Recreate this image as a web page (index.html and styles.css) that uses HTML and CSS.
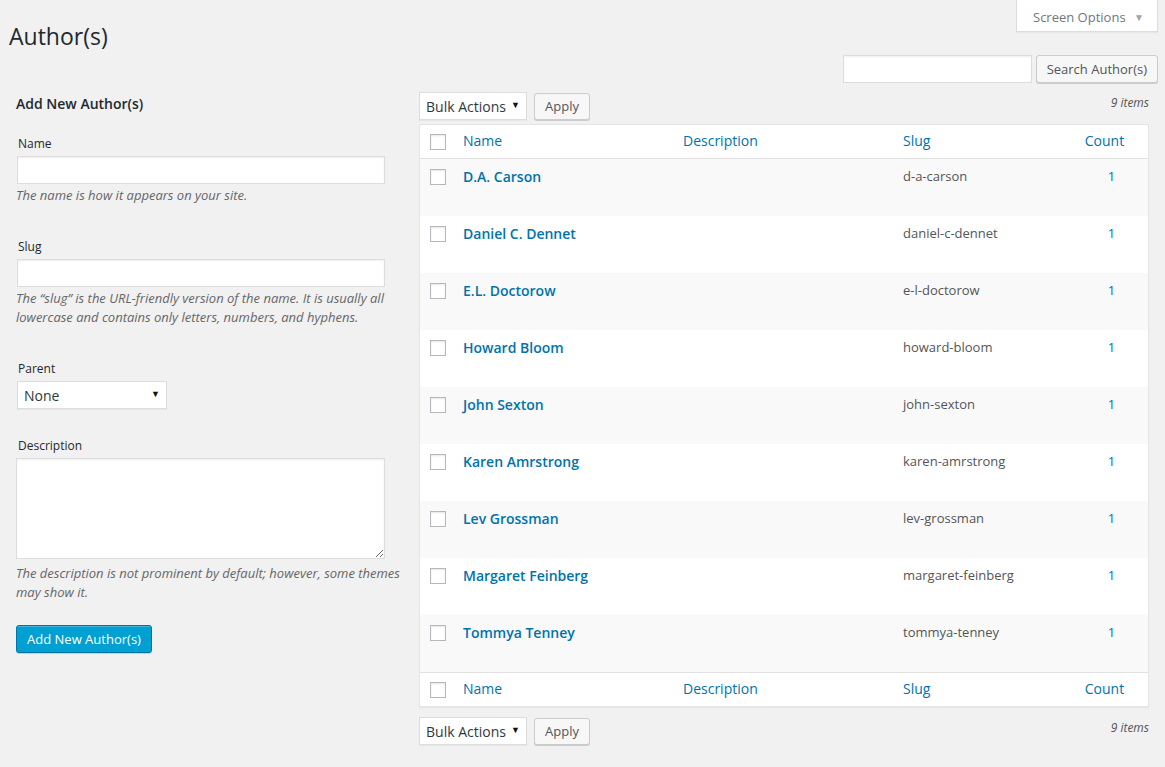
FILE: index.html
```html
<!DOCTYPE html>
<html lang="en">
<head>
<meta charset="utf-8">
<title>Author(s)</title>
<link rel="stylesheet" href="styles.css">
</head>
<body>
<div class="page">
  <div class="topbar">
    <h1 class="title">Author(s)</h1>
    <div class="screen-tab">Screen Options <span class="tab-caret">▼</span></div>
  </div>
  <div class="search-row">
    <input class="text-input search-input" type="text">
    <button class="btn">Search Author(s)</button>
  </div>
  <div class="cols">
    <div class="col-left">
      <h2 class="form-title">Add New Author(s)</h2>
      <div class="field">
        <label class="label">Name</label>
        <input class="text-input wide" type="text">
        <p class="help">The name is how it appears on your site.</p>
      </div>
      <div class="field">
        <label class="label">Slug</label>
        <input class="text-input wide" type="text">
        <p class="help">The “slug” is the URL-friendly version of the name. It is usually all lowercase and contains only letters, numbers, and hyphens.</p>
      </div>
      <div class="field">
        <label class="label">Parent</label>
        <div class="select parent-select"><span>None</span><span class="caret">▼</span></div>
      </div>
      <div class="field last">
        <label class="label">Description</label>
        <textarea class="textarea"></textarea>
        <p class="help">The description is not prominent by default; however, some themes may show it.</p>
      </div>
      <button class="btn btn-primary">Add New Author(s)</button>
    </div>
    <div class="col-right">
      <div class="tablenav">
        <div class="select bulk-select"><span>Bulk Actions</span><span class="caret">▼</span></div>
        <button class="btn apply">Apply</button>
        <span class="num">9 items</span>
      </div>
      <table class="list">
        <colgroup>
          <col class="c-check"><col class="c-name"><col class="c-desc"><col class="c-slug"><col class="c-count">
        </colgroup>
        <thead>
          <tr>
            <th class="check"><span class="cb"></span></th>
            <th><a>Name</a></th>
            <th><a>Description</a></th>
            <th><a>Slug</a></th>
            <th class="count"><a>Count</a></th>
          </tr>
        </thead>
        <tbody>
          <tr class="alt"><td class="check"><span class="cb"></span></td><td class="name"><a>D.A. Carson</a></td><td></td><td class="slug">d-a-carson</td><td class="count"><a>1</a></td></tr>
          <tr><td class="check"><span class="cb"></span></td><td class="name"><a>Daniel C. Dennet</a></td><td></td><td class="slug">daniel-c-dennet</td><td class="count"><a>1</a></td></tr>
          <tr class="alt"><td class="check"><span class="cb"></span></td><td class="name"><a>E.L. Doctorow</a></td><td></td><td class="slug">e-l-doctorow</td><td class="count"><a>1</a></td></tr>
          <tr><td class="check"><span class="cb"></span></td><td class="name"><a>Howard Bloom</a></td><td></td><td class="slug">howard-bloom</td><td class="count"><a>1</a></td></tr>
          <tr class="alt"><td class="check"><span class="cb"></span></td><td class="name"><a>John Sexton</a></td><td></td><td class="slug">john-sexton</td><td class="count"><a>1</a></td></tr>
          <tr><td class="check"><span class="cb"></span></td><td class="name"><a>Karen Amrstrong</a></td><td></td><td class="slug">karen-amrstrong</td><td class="count"><a>1</a></td></tr>
          <tr class="alt"><td class="check"><span class="cb"></span></td><td class="name"><a>Lev Grossman</a></td><td></td><td class="slug">lev-grossman</td><td class="count"><a>1</a></td></tr>
          <tr><td class="check"><span class="cb"></span></td><td class="name"><a>Margaret Feinberg</a></td><td></td><td class="slug">margaret-feinberg</td><td class="count"><a>1</a></td></tr>
          <tr class="alt"><td class="check"><span class="cb"></span></td><td class="name"><a>Tommya Tenney</a></td><td></td><td class="slug">tommya-tenney</td><td class="count"><a>1</a></td></tr>
        </tbody>
        <tfoot>
          <tr>
            <th class="check"><span class="cb"></span></th>
            <th><a>Name</a></th>
            <th><a>Description</a></th>
            <th><a>Slug</a></th>
            <th class="count"><a>Count</a></th>
          </tr>
        </tfoot>
      </table>
      <div class="tablenav bottom">
        <div class="select bulk-select"><span>Bulk Actions</span><span class="caret">▼</span></div>
        <button class="btn apply">Apply</button>
        <span class="num">9 items</span>
      </div>
    </div>
  </div>
</div>
</body>
</html>
```

FILE: styles.css
```css
html, body {
  margin: 0;
  padding: 0;
}
body {
  background: #f1f1f1;
  font-family: "Open Sans", "Liberation Sans", sans-serif;
  font-size: 13px;
  color: #444;
  width: 1165px;
  height: 767px;
  overflow: hidden;
}
.page {
  display: flex;
  flex-direction: column;
}
.topbar {
  display: flex;
  justify-content: space-between;
  align-items: flex-start;
  padding-right: 7px;
}
.title {
  margin: 22px 0 0 9px;
  font-size: 23px;
  font-weight: 400;
  line-height: 29px;
  color: #23282d;
}
.screen-tab {
  box-sizing: border-box;
  width: 142px;
  height: 32px;
  background: #fff;
  border: 1px solid #ddd;
  border-top: none;
  box-shadow: 0 1px 1px rgba(0,0,0,.04);
  color: #72777c;
  font-size: 13px;
  line-height: 34px;
  padding-left: 16px;
}
.tab-caret {
  font-size: 10px;
  color: #a0a5aa;
  margin-left: 5px;
  vertical-align: 1px;
}
.search-row {
  display: flex;
  justify-content: flex-end;
  gap: 4px;
  padding-right: 7px;
  margin-top: 4px;
}
.text-input {
  box-sizing: border-box;
  height: 28px;
  border: 1px solid #ddd;
  background: #fff;
  box-shadow: inset 0 1px 2px rgba(0,0,0,.07);
  margin: 0;
  padding: 3px 5px;
  font-family: inherit;
  font-size: 14px;
}
.search-input {
  width: 189px;
}
.btn {
  box-sizing: border-box;
  height: 28px;
  margin: 0;
  padding: 0 10px;
  background: #f7f7f7;
  border: 1px solid #ccc;
  border-radius: 3px;
  box-shadow: 0 1px 0 #ccc;
  color: #555;
  font-family: inherit;
  font-size: 13px;
  line-height: 26px;
}
.btn-primary {
  background: #00a0d2;
  border-color: #0073aa;
  box-shadow: inset 0 1px 0 rgba(120,200,230,.5), 0 1px 0 rgba(0,0,0,.15);
  color: #fff;
  width: 136px;
  margin-top: 18px;
}
.cols {
  display: flex;
  margin-top: 9px;
}
.col-left {
  box-sizing: border-box;
  width: 404px;
  padding-left: 16px;
}
.col-right {
  width: 730px;
  margin-left: 15px;
}
.form-title {
  margin: 2px 0 22px;
  font-size: 14px;
  font-weight: 600;
  line-height: 19px;
  color: #23282d;
}
.field {
  display: flow-root;
  margin-bottom: 28px;
}
.field.last {
  margin-bottom: 0;
}
.label {
  display: block;
  padding-left: 2px;
  font-size: 12px;
  line-height: 18px;
  color: #23282d;
  margin-bottom: 3px;
}
.wide {
  display: block;
  width: 368px;
  margin-left: 1px;
}
.help {
  margin: 2px 0 5px;
  font-size: 13px;
  font-style: italic;
  line-height: 19px;
  color: #666;
}
.select {
  box-sizing: border-box;
  display: flex;
  justify-content: space-between;
  align-items: center;
  height: 28px;
  background: #fff;
  border: 1px solid #ddd;
  box-shadow: 0 1px 1px rgba(0,0,0,.04);
  color: #32373c;
  font-size: 14px;
  padding: 0 6px 0 6px;
}
.caret {
  font-size: 9px;
  color: #111;
  margin-top: -3px;
}
.parent-select {
  width: 150px;
  margin-left: 1px;
}
.textarea {
  display: block;
  box-sizing: border-box;
  width: 369px;
  height: 101px;
  margin: 2px 0 5px;
  border: 1px solid #ddd;
  box-shadow: inset 0 1px 2px rgba(0,0,0,.07);
  background: #fff;
  resize: vertical;
}
.tablenav {
  display: flex;
  align-items: flex-start;
  height: 32px;
}
.tablenav.bottom {
  margin-top: 10px;
}
.bulk-select {
  width: 108px;
}
.apply {
  width: 56px;
  height: 27px;
  line-height: 25px;
  margin-left: 7px;
  margin-top: 1px;
}
.num {
  margin-left: auto;
  font-size: 12px;
  font-style: italic;
  color: #555;
  line-height: 22px;
}
.list {
  width: 730px;
  table-layout: fixed;
  border-collapse: separate;
  border-spacing: 0;
  background: #fff;
  border: 1px solid #e5e5e5;
  box-shadow: 0 1px 1px rgba(0,0,0,.04);
}
.c-check { width: 33px; }
.c-name { width: 220px; }
.c-desc { width: 220px; }
.c-slug { width: 182px; }
.c-count { width: 73px; }
.list th {
  height: 34px;
  box-sizing: border-box;
  padding: 0 10px 2px;
  text-align: left;
  font-weight: 400;
  font-size: 14px;
  vertical-align: middle;
}
.list thead th {
  border-bottom: 1px solid #e1e1e1;
}
.list tfoot th {
  border-top: 1px solid #e1e1e1;
}
.list a {
  color: #0073aa;
}
.list th.check {
  padding: 0 0 0 10px;
}
.list td {
  height: 57px;
  box-sizing: border-box;
  padding: 8px 10px;
  vertical-align: top;
  line-height: 19px;
}
.list td.check {
  padding: 10px 0 0 10px;
}
.list tr.alt td {
  background: #f9f9f9;
}
.cb {
  display: block;
  box-sizing: border-box;
  width: 16px;
  height: 16px;
  border: 1px solid #b4b9be;
  background: #fff;
  box-shadow: inset 0 1px 2px rgba(0,0,0,.1);
}
.list td.name {
  font-size: 14px;
  font-weight: 600;
}
.list td.slug {
  font-size: 13px;
  color: #555;
}
.list th.count {
  text-align: center;
  padding: 0 14px 2px 0;
}
.list td.count {
  text-align: center;
  padding: 8px 0;
  font-size: 13px;
}
```
